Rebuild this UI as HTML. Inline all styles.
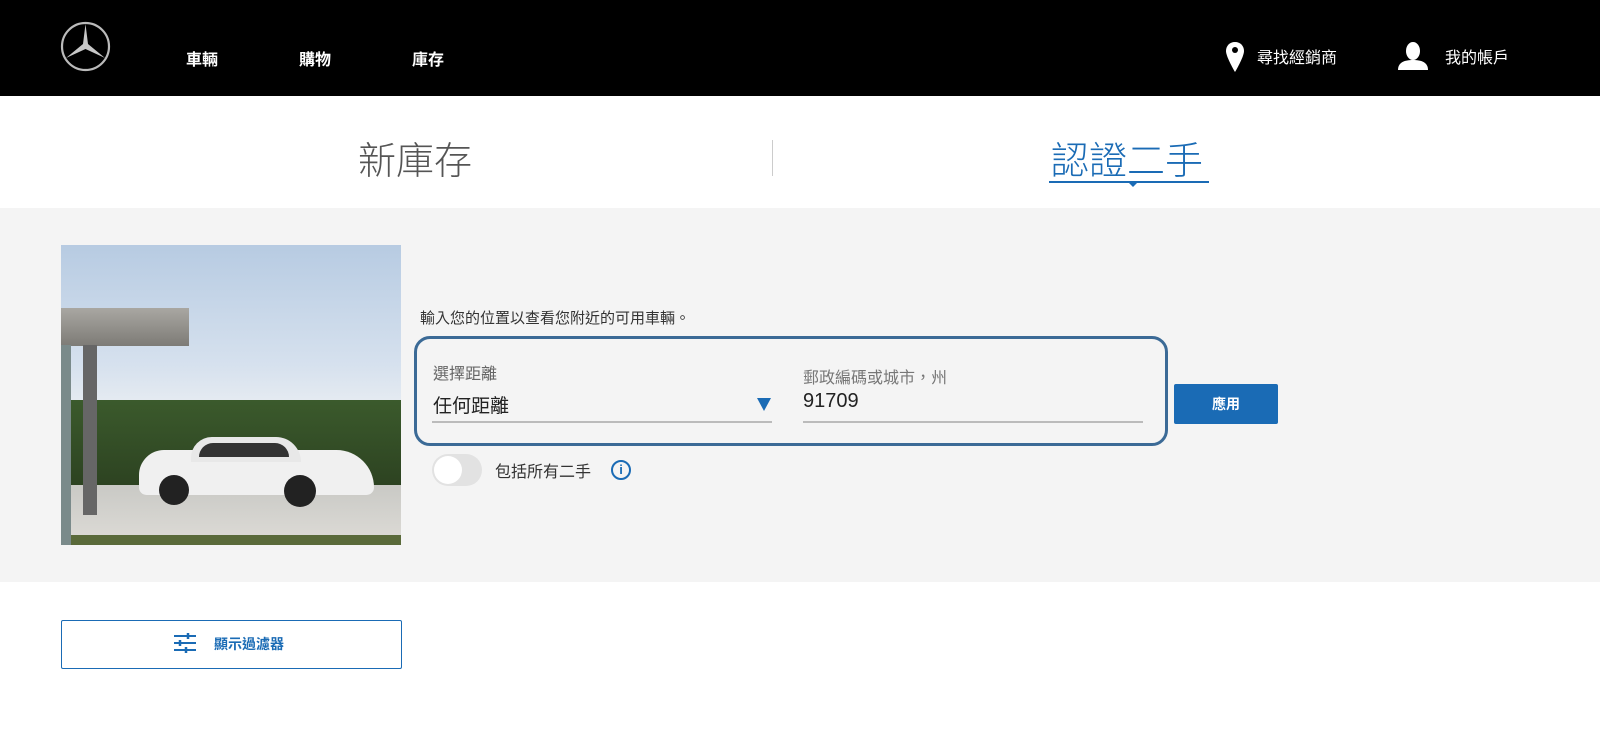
<!DOCTYPE html>
<html><head><meta charset="utf-8"><style>
*{margin:0;padding:0;box-sizing:border-box}
body{width:1600px;height:735px;overflow:hidden;background:#fff;font-family:"Liberation Sans","Noto Sans CJK TC",sans-serif;position:relative}
.hdr{position:absolute;left:0;top:0;width:1600px;height:96px;background:#000}
.nav{position:absolute;top:46px;color:#fff;font-size:16px;font-weight:bold}
.rt{position:absolute;top:44px;color:#fff;font-size:16px}
.tab{position:absolute;top:130px;font-size:38px;font-weight:300}
.gray{position:absolute;left:0;top:208px;width:1600px;height:374px;background:#f4f4f4}
.abs{position:absolute}
</style></head><body>
<div class="hdr">
<svg class="abs" style="left:60px;top:21px" width="51" height="51" viewBox="0 0 51 51"><circle cx="25.5" cy="25.5" r="23.5" fill="none" stroke="#bbb" stroke-width="2.2"/><path d="M25.5 3 L28 23 L45 37 L25.5 28 L6 37 L23 23 Z" fill="#c8c8c8"/></svg>
<div class="nav" style="left:186px">車輛</div>
<div class="nav" style="left:299px">購物</div>
<div class="nav" style="left:412px">庫存</div>
<svg class="abs" style="left:1225px;top:41px" width="20" height="32" viewBox="0 0 20 32"><path d="M10 1C4.5 1 1 5 1 10c0 6 9 21 9 21s9-15 9-21c0-5-3.5-9-9-9z" fill="#fff"/><circle cx="10" cy="9" r="3" fill="#000"/></svg>
<div class="rt" style="left:1257px">尋找經銷商</div>
<svg class="abs" style="left:1397px;top:40px" width="32" height="31" viewBox="0 0 32 31"><ellipse cx="16" cy="11" rx="7" ry="9" fill="#fff"/><path d="M1 30c0-8 7-10 15-10s15 2 15 10z" fill="#fff"/></svg>
<div class="rt" style="left:1445px">我的帳戶</div>
</div>
<div class="tab" style="left:358px;color:#555">新庫存</div>
<div class="abs" style="left:772px;top:140px;width:1px;height:36px;background:#ccc"></div>
<div class="tab" style="left:1051px;color:#1a6bb5">認證二手</div>
<div class="abs" style="left:1049px;top:181px;width:160px;height:2px;background:#1a6bb5"></div>
<div class="abs" style="left:1127px;top:181px;width:0;height:0;border-left:6px solid transparent;border-right:6px solid transparent;border-top:6px solid #1a6bb5"></div>
<div class="gray"></div>
<div class="abs" style="left:61px;top:245px;width:340px;height:300px;overflow:hidden;background:linear-gradient(#b7cbe2 0%,#d6e1ee 40%,#e8edf2 55%)">
 <div class="abs" style="left:0;top:155px;width:340px;height:95px;background:linear-gradient(#3b5a2c,#2b4020)"></div>
 <div class="abs" style="left:0;top:240px;width:340px;height:60px;background:linear-gradient(#c9c9c5,#dedcd7)"></div>
 <div class="abs" style="left:0;top:290px;width:340px;height:10px;background:#5a6a3a"></div>
 <div class="abs" style="left:0;top:63px;width:128px;height:38px;background:linear-gradient(#a9a7a2,#7d7b76)"></div>
 <div class="abs" style="left:0;top:100px;width:10px;height:200px;background:#7a8a8a"></div>
 <div class="abs" style="left:22px;top:100px;width:14px;height:170px;background:#666"></div>
 <div class="abs" style="left:78px;top:205px;width:235px;height:45px;background:#f0f0f0;border-radius:40px 60px 12px 12px"></div>
 <div class="abs" style="left:130px;top:192px;width:110px;height:25px;background:#e8e8e8;border-radius:50px 60px 0 0"></div>
 <div class="abs" style="left:138px;top:198px;width:90px;height:14px;background:#333;border-radius:30px 30px 0 0"></div>
 <div class="abs" style="left:98px;top:230px;width:30px;height:30px;background:#222;border-radius:50%"></div>
 <div class="abs" style="left:223px;top:230px;width:32px;height:32px;background:#222;border-radius:50%"></div>
</div>
<div class="abs" style="left:420px;top:307px;font-size:15px;color:#333">輸入您的位置以查看您附近的可用車輛。</div>
<div class="abs" style="left:414px;top:336px;width:754px;height:110px;border:3px solid #3b6a96;border-radius:16px"></div>
<div class="abs" style="left:433px;top:360px;font-size:16px;color:#666">選擇距離</div>
<div class="abs" style="left:433px;top:391px;font-size:19px;color:#222">任何距離</div>
<div class="abs" style="left:757px;top:398px;width:0;height:0;border-left:7px solid transparent;border-right:7px solid transparent;border-top:13px solid #1a6bb5"></div>
<div class="abs" style="left:432px;top:421px;width:340px;height:2px;background:#bbb"></div>
<div class="abs" style="left:803px;top:364px;font-size:16px;color:#777">郵政編碼或城市，州</div>
<div class="abs" style="left:803px;top:390px;font-size:20px;color:#222">91709</div>
<div class="abs" style="left:803px;top:421px;width:340px;height:2px;background:#bbb"></div>
<div class="abs" style="left:1174px;top:384px;width:104px;height:40px;background:#1a6bb5;border-radius:2px;color:#fff;font-size:14px;font-weight:bold;text-align:center;line-height:40px">應用</div>
<div class="abs" style="left:432px;top:454px;width:50px;height:32px;background:#e2e2e2;border-radius:16px"></div>
<div class="abs" style="left:434px;top:456px;width:28px;height:28px;background:#fff;border-radius:50%"></div>
<div class="abs" style="left:495px;top:458px;font-size:16px;color:#333">包括所有二手</div>
<div class="abs" style="left:611px;top:460px;width:20px;height:20px;border:2px solid #1a6bb5;border-radius:50%;color:#1a6bb5;font-size:13px;font-weight:bold;text-align:center;line-height:16px">i</div>
<div class="abs" style="left:61px;top:620px;width:341px;height:49px;border:1px solid #1a6bb5;border-radius:2px"></div>
<svg class="abs" style="left:174px;top:633px" width="22" height="20" viewBox="0 0 22 20" stroke="#1a6bb5" stroke-width="2"><path d="M0 3h22M0 10h22M0 17h22"/><path d="M14 0v6M6 7v6M12 14v6" stroke-width="2.5"/></svg>
<div class="abs" style="left:214px;top:634px;font-size:14px;color:#1a6bb5;font-weight:bold">顯示過濾器</div>
</body></html>
